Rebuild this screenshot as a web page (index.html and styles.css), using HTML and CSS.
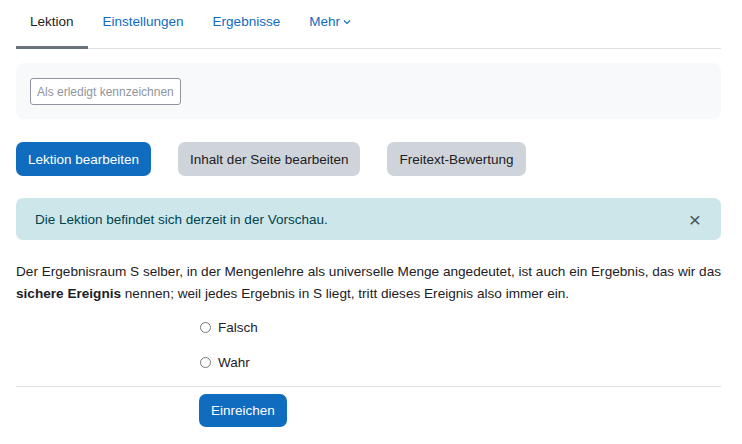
FILE: index.html
```html
<!DOCTYPE html>
<html>
	<head>
		<meta charset="UTF-8">
		<title>Lektion</title>
		<link rel="stylesheet" href="styles.css">
	</head>
	<body>
		<div class="page">
			<ul class="tabs">
				<li class="active"><a href="#">Lektion</a></li>
				<li><a href="#">Einstellungen</a></li>
				<li><a href="#">Ergebnisse</a></li>
				<li><a href="#">Mehr <svg class="chev" width="8" height="6" viewBox="0 0 8 6"><path d="M1 1.5 L4 4.5 L7 1.5" fill="none" stroke="currentColor" stroke-width="1.1"/></svg></a></li>
			</ul>
			<div class="completion">
				<button class="btn-outline">Als erledigt kennzeichnen</button>
			</div>
			<div class="actions">
				<button class="btn btn-primary">Lektion bearbeiten</button>
				<button class="btn btn-secondary">Inhalt der Seite bearbeiten</button>
				<button class="btn btn-secondary">Freitext-Bewertung</button>
			</div>
			<div class="alert">
				<span>Die Lektion befindet sich derzeit in der Vorschau.</span>
				<span class="close">&times;</span>
			</div>
			<p class="question">Der Ergebnisraum S selber, in der Mengenlehre als universelle Menge angedeutet, ist auch ein Ergebnis, das wir das <b>sichere Ereignis</b> nennen; weil jedes Ergebnis in S liegt, tritt dieses Ereignis also immer ein.</p>
			<div class="answers">
				<label><input type="radio" name="a"> Falsch</label>
				<label><input type="radio" name="a"> Wahr</label>
			</div>
			<hr>
			<div class="submit">
				<button class="btn btn-primary">Einreichen</button>
			</div>
		</div>
	</body>
</html>
```
FILE: styles.css
```css
*{
	margin: 0;
	padding: 0;
	box-sizing: border-box;
}
body{
	font-family: "Liberation Sans", Arial, sans-serif;
	font-size: 13.5px;
	color: #1d2125;
	background: #fff;
}
.page{
	padding: 0 21px 0 16px;
}
.tabs{
	list-style: none;
	display: flex;
	border-bottom: 1px solid #dee2e6;
	height: 49px;
}
.tabs li{
	display: flex;
}
.tabs a{
	display: flex;
	align-items: center;
	padding: 0 14px 3px;
	color: #0f6cbf;
	text-decoration: none;
	border-bottom: 3px solid transparent;
	margin-bottom: -1px;
}
.tabs li + li a{
	margin-left: 1px;
}
.tabs .active a{
	color: #1d2125;
	border-bottom-color: #6a737b;
}
.chev{
	margin-left: 3px;
}
.completion{
	margin-top: 14px;
	background: #f8f9fa;
	border-radius: 8px;
	padding: 15px 14px;
	height: 56px;
}
.btn-outline{
	font: inherit;
	font-size: 12px;
	color: #8f959e;
	background: #fff;
	border: 1px solid #8f959e;
	border-radius: 3px;
	height: 27px;
	padding: 0 6px;
}
.actions{
	display: flex;
	gap: 27px;
	margin-top: 23px;
}
.btn{
	font: inherit;
	border: 0;
	border-radius: 7px;
	height: 34px;
	padding: 0 12px;
}
.btn-primary{
	background: #0f6cbf;
	color: #fff;
}
.btn-secondary{
	background: #ced4da;
	color: #1d2125;
}
.alert{
	display: flex;
	justify-content: space-between;
	align-items: center;
	margin-top: 22px;
	background: #cce6ea;
	color: #00434e;
	border-radius: 7px;
	height: 42px;
	padding: 0 20px 0 19px;
}
.alert .close{
	font-size: 21px;
	color: #4b5359;
	line-height: 1;
}
.question{
	margin-top: 21px;
	line-height: 22px;
	font-size: 13.6px;
}
.answers{
	margin-left: 183px;
	margin-top: 11px;
	display: flex;
	flex-direction: column;
	gap: 13px;
}
.answers label{
	display: flex;
	align-items: center;
	height: 22px;
}
.answers input{
	margin: 0 7px 0 1px;
	width: 11px;
	height: 11px;
}
hr{
	border: 0;
	border-top: 1px solid #dee2e6;
	margin-top: 13px;
}
.submit{
	margin: 7px 0 0 183px;
}
.submit .btn{
	height: 33px;
}
```
